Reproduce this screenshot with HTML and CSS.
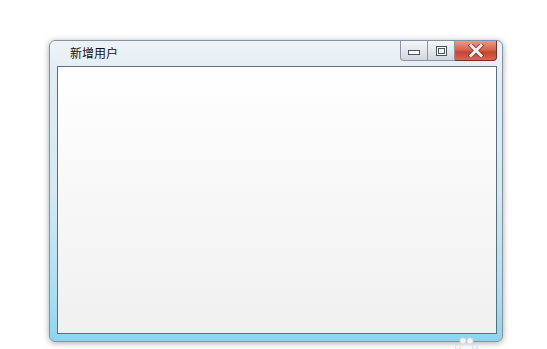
FILE: index.html
```html
<html>
    <head>
        <link rel="stylesheet" href="styles.css">
    </head>
    <body>
        <div class="window">
            <div class="titlebar">
                <div class="title">新增用户</div>
                <div class="buttons">
                    <div class="btn min"><span class="glyph-min"></span></div>
                    <div class="btn max"><span class="glyph-max"></span></div>
                    <div class="btn close">
                        <svg width="16" height="13" viewBox="0 0 16 13">
                            <path d="M3 1.5 L13 11.5 M13 1.5 L3 11.5" stroke="#8c3a2d" stroke-width="4.6" stroke-linecap="square"/>
                            <path d="M3 1.5 L13 11.5 M13 1.5 L3 11.5" stroke="#f3f1f0" stroke-width="3" stroke-linecap="square"/>
                        </svg>
                    </div>
                </div>
            </div>
            <div class="client"></div>
        </div>

        <svg class="mark" width="28" height="14" viewBox="0 0 28 14">
            <circle cx="10" cy="5" r="3.2" fill="#f4f4f6" stroke="#c9cfd8" stroke-width="0.8"/>
            <circle cx="17" cy="5" r="3.2" fill="#f4f4f6" stroke="#c9cfd8" stroke-width="0.8"/>
            <circle cx="5" cy="11" r="2.6" fill="#f4f4f6" stroke="#d3d8df" stroke-width="0.8"/>
            <circle cx="22" cy="11" r="2.6" fill="#f4f4f6" stroke="#d3d8df" stroke-width="0.8"/>
        </svg>
    </body>
</html>
```

FILE: styles.css
```css
body {
    margin: 0;
    background: #fff;
    font-family: "Noto Sans CJK SC", sans-serif;
    position: relative;
    height: 349px;
    overflow: hidden;
}

.window {
    margin: 40px 0 0 49px;
    width: 454px;
    height: 302px;
    box-sizing: border-box;
    border: 1px solid #8593a0;
    border-radius: 6px;
    padding: 0 5px 7px 7px;
    display: flex;
    flex-direction: column;
    background: linear-gradient(to bottom, #eef3f8 0%, #e2ecf4 12%, #d4e9f3 50%, #aadef2 85%, #8cd4ef 100%);
    box-shadow: 0 1px 6px rgba(0, 0, 0, 0.35);
}

.titlebar {
    height: 25px;
    display: flex;
    justify-content: space-between;
    align-items: flex-start;
    flex-shrink: 0;
}

.title {
    font-size: 12px;
    color: #111;
    padding: 3px 0 0 13px;
    line-height: 18px;
}

.buttons {
    display: flex;
    height: 20px;
}

.btn {
    height: 20px;
    box-sizing: border-box;
    border: 1px solid #8b97a4;
    border-top: 0;
    display: flex;
    align-items: center;
    justify-content: center;
}

.min {
    width: 28px;
    border-radius: 0 0 0 4px;
    background: linear-gradient(to bottom, #f4f6f8 0%, #e4e8ec 50%, #cfd6dd 100%);
}

.max {
    width: 27px;
    border-left: 0;
    background: linear-gradient(to bottom, #f4f6f8 0%, #e4e8ec 50%, #cfd6dd 100%);
}

.close {
    width: 42px;
    border-color: #7e2c20;
    border-left: 0;
    border-radius: 0 0 4px 0;
    background: linear-gradient(to bottom, #e89a8b 0%, #d8664f 45%, #c84532 60%, #d36a50 100%);
}

.glyph-min {
    width: 10px;
    height: 3px;
    border: 1px solid #4a5560;
    background: #fff;
    margin-top: 4px;
}

.glyph-max {
    width: 7px;
    height: 6px;
    border: 1px solid #4a5560;
    box-shadow: inset 0 0 0 1px #fff, inset 0 0 0 2px #4a5560;
    padding: 1px;
    background: #fff;
}

.client {
    flex: 1;
    border: 1px solid #5c6d7c;
    background: linear-gradient(to bottom, #ffffff 0%, #f9f9f9 40%, #f0f0f0 100%);
}

.mark {
    position: absolute;
    left: 453px;
    top: 336px;
}
```
